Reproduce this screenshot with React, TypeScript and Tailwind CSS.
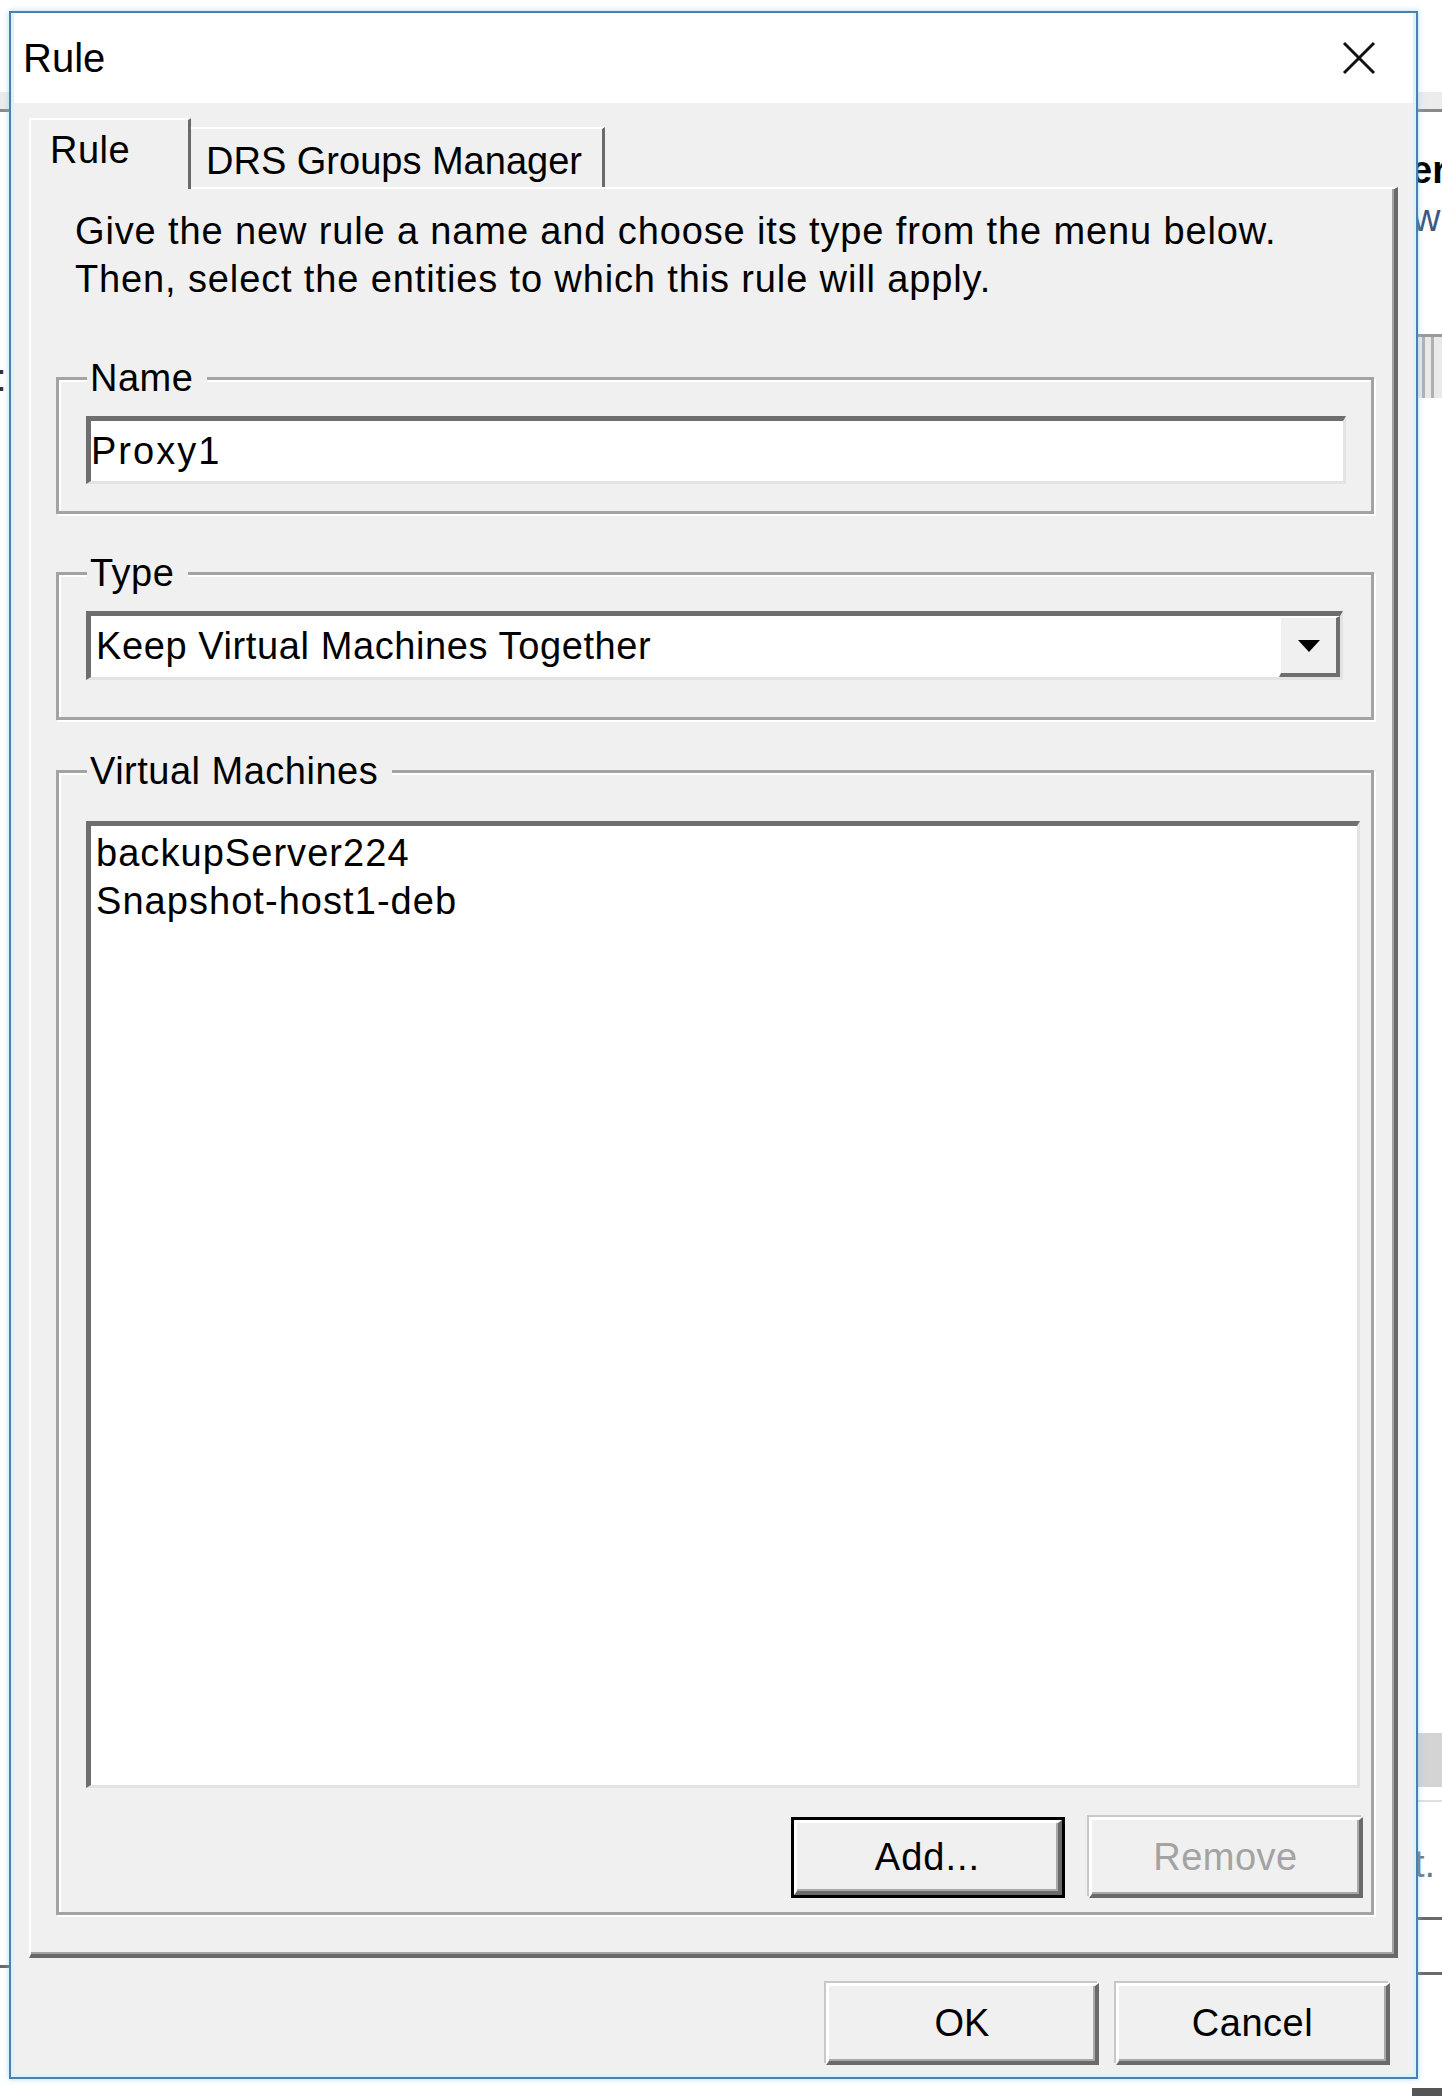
import React from "react";

function RaisedButton({ label, disabled, isDefault }: { label: string; disabled?: boolean; isDefault?: boolean }) {
  const inner = (
    <div className="flex-1 flex items-center justify-center bg-[#f0f0f0] border-t-[3px] border-l-[3px] border-t-white border-l-white border-b-[4px] border-r-[4px] border-b-[#6a6a6a] border-r-[#6a6a6a] shadow-[inset_-2px_-2px_0_#a9a9a9]">
      <span className={disabled ? "text-[#a3a3a3] tracking-[0.5px]" : "text-black tracking-[1px]"}>{label}</span>
    </div>
  );
  if (isDefault) {
    return (
      <div className="w-[274px] h-[81px] flex border-[3px] border-black">{inner}</div>
    );
  }
  return <div className="w-[274px] h-[81px] flex shadow-[-2px_-2px_0_#c8c8c8]">{inner}</div>;
}

function GroupBox({ label, className, children }: { label: string; className: string; children: React.ReactNode }) {
  return (
    <div className={"relative border-[3px] border-[#a3a3a3] shadow-[inset_2px_2px_0_#ffffff,2px_2px_0_#ffffff] " + className}>
      <span className="absolute left-[28px] top-[-26px] bg-[#f0f0f0] pl-[3px] pr-[14px] leading-[48px] tracking-[0.5px]">{label}</span>
      {children}
    </div>
  );
}

export default function App() {
  return (
    <div className="relative w-[1442px] h-[2096px] bg-white overflow-hidden font-['Liberation_Sans',Arial,sans-serif] text-[38px] text-black">
      {/* background application fragments */}
      <div className="absolute left-0 top-[92px] w-[1442px] h-[20px] bg-[#ececec] border-b-[3px] border-[#8a8a8a]" />
      <div className="absolute left-[1411px] top-[146px] leading-[48px] font-bold">er</div>
      <div className="absolute left-[1413px] top-[194px] leading-[48px] text-[#3f5a80]">wi</div>
      <div className="absolute left-[1400px] top-[334px] w-[60px] h-[64px] bg-[#e9e9e9] border-t-[3px] border-[#9a9a9a] flex gap-[6px] pl-[22px]">
        <div className="w-[3px] h-full bg-[#b0b0b0]" />
        <div className="w-[3px] h-full bg-[#b0b0b0]" />
      </div>
      <div className="absolute left-[-4px] top-[354px] leading-[48px] text-[#333]">:</div>
      <div className="absolute left-[1400px] top-[1733px] w-[60px] h-[54px] bg-[#d4d4d4]" />
      <div className="absolute left-[1400px] top-[1800px] w-[60px] h-[2px] bg-[#e0e0e0]" />
      <div className="absolute left-[1414px] top-[1840px] leading-[48px] text-[#6d7b8c]">t.</div>
      <div className="absolute left-[1400px] top-[1917px] w-[60px] h-[3px] bg-[#6a6a6a]" />
      <div className="absolute left-[1400px] top-[1972px] w-[60px] h-[3px] bg-[#6a6a6a]" />
      <div className="absolute left-0 top-[1965px] w-[20px] h-[3px] bg-[#6a6a6a]" />
      <div className="absolute left-[1412px] top-[2088px] w-[40px] h-[8px] bg-[#555]" />

      {/* dialog window */}
      <div className="absolute left-[9px] top-[11px] w-[1409px] h-[2068px] border-2 border-[#4a7fae] bg-[#dcf2fb] px-[3px] pb-[3px] flex flex-col shadow-[0_0_6px_rgba(120,200,235,0.6)]">
        {/* title bar */}
        <div className="h-[90px] bg-white flex items-center justify-between pl-[9px] pr-[37px]">
          <span className="text-[40px] leading-none">Rule</span>
          <svg width="34" height="34" viewBox="0 0 34 34" className="block">
            <line x1="2" y1="2" x2="32" y2="32" stroke="#111" strokeWidth="3" />
            <line x1="32" y1="2" x2="2" y2="32" stroke="#111" strokeWidth="3" />
          </svg>
        </div>

        {/* body */}
        <div className="flex-1 bg-[#f0f0f0] flex flex-col pt-[15px] px-[15px]">
          {/* tabs */}
          <div className="flex items-end h-[69px]">
            <div className="relative z-10 w-[162px] h-[71px] -mb-[2px] bg-[#f0f0f0] border-t-2 border-l-2 border-white border-r-[3px] border-r-[#6a6a6a] pl-[19px] pt-[6px] leading-[48px] tracking-[0.5px]">
              Rule
            </div>
            <div className="w-[414px] h-[60px] bg-[#f0f0f0] border-t-2 border-white border-r-[3px] border-r-[#6a6a6a] pl-[15px] pt-[8px] leading-[48px]">
              DRS Groups Manager
            </div>
          </div>

          {/* tab panel */}
          <div className="h-[1771px] flex flex-col border-l-2 border-t-2 border-white border-r-[4px] border-b-[4px] border-r-[#696969] border-b-[#696969] shadow-[inset_-2px_-2px_0_#a3a3a3] pt-[18px] pl-[25px] pr-[20px] pb-[39px]">
            <div className="pl-[19px] leading-[48px] tracking-[0.87px]">
              <div>Give the new rule a name and choose its type from the menu below.</div>
              <div>Then, select the entities to which this rule will apply.</div>
            </div>

            <GroupBox label="Name" className="mt-[74px] h-[137px] pt-[36px] pl-[27px] pr-[25px]">
              <div className="h-[68px] bg-white border-t-[5px] border-l-[5px] border-t-[#6e6e6e] border-l-[#6e6e6e] border-b-[3px] border-r-[3px] border-b-[#e3e3e3] border-r-[#e3e3e3] flex items-center tracking-[2px]">
                Proxy1
              </div>
            </GroupBox>

            <GroupBox label="Type" className="mt-[58px] h-[148px] pt-[36px] pl-[27px] pr-[28px]">
              <div className="h-[69px] bg-white border-t-[5px] border-l-[5px] border-t-[#6e6e6e] border-l-[#6e6e6e] border-b-[3px] border-r-[3px] border-b-[#e3e3e3] border-r-[#e3e3e3] flex items-center">
                <span className="flex-1 pl-[5px] tracking-[0.6px]">Keep Virtual Machines Together</span>
                <div className="w-[61px] h-full bg-[#f0f0f0] border-t-2 border-l-2 border-white border-b-[4px] border-r-[4px] border-b-[#6e6e6e] border-r-[#6e6e6e] flex items-center justify-center">
                  <svg width="22" height="12" viewBox="0 0 22 12" className="block">
                    <polygon points="0,0 22,0 11,12" fill="#000" />
                  </svg>
                </div>
              </div>
            </GroupBox>

            <GroupBox label="Virtual Machines" className="mt-[50px] flex-1 flex flex-col pt-[48px] pl-[27px] pr-[8px] pb-[14px]">
              <div className="flex-1 mr-[3px] bg-white border-t-[5px] border-l-[5px] border-t-[#6e6e6e] border-l-[#6e6e6e] border-b-[3px] border-r-[3px] border-b-[#e3e3e3] border-r-[#e3e3e3] pt-[3px] pl-[5px] leading-[48px] tracking-[1.05px]">
                <div>backupServer224</div>
                <div>Snapshot-host1-deb</div>
              </div>
              <div className="mt-[29px] flex justify-end gap-[24px]">
                <RaisedButton label="Add..." isDefault />
                <RaisedButton label="Remove" disabled />
              </div>
            </GroupBox>
          </div>

          {/* footer */}
          <div className="flex justify-end gap-[17px] pt-[25px] pr-[8px]">
            <div className="w-[273px] h-[82px] flex shadow-[-2px_-2px_0_#c8c8c8]">
              <div className="flex-1 flex items-center justify-center bg-[#f0f0f0] border-t-[3px] border-l-[3px] border-t-white border-l-white border-b-[4px] border-r-[4px] border-b-[#6a6a6a] border-r-[#6a6a6a] shadow-[inset_-2px_-2px_0_#a9a9a9]">OK</div>
            </div>
            <div className="w-[274px] h-[82px] flex shadow-[-2px_-2px_0_#c8c8c8]">
              <div className="flex-1 flex items-center justify-center bg-[#f0f0f0] border-t-[3px] border-l-[3px] border-t-white border-l-white border-b-[4px] border-r-[4px] border-b-[#6a6a6a] border-r-[#6a6a6a] shadow-[inset_-2px_-2px_0_#a9a9a9] tracking-[0.5px]">Cancel</div>
            </div>
          </div>
        </div>
      </div>
    </div>
  );
}
